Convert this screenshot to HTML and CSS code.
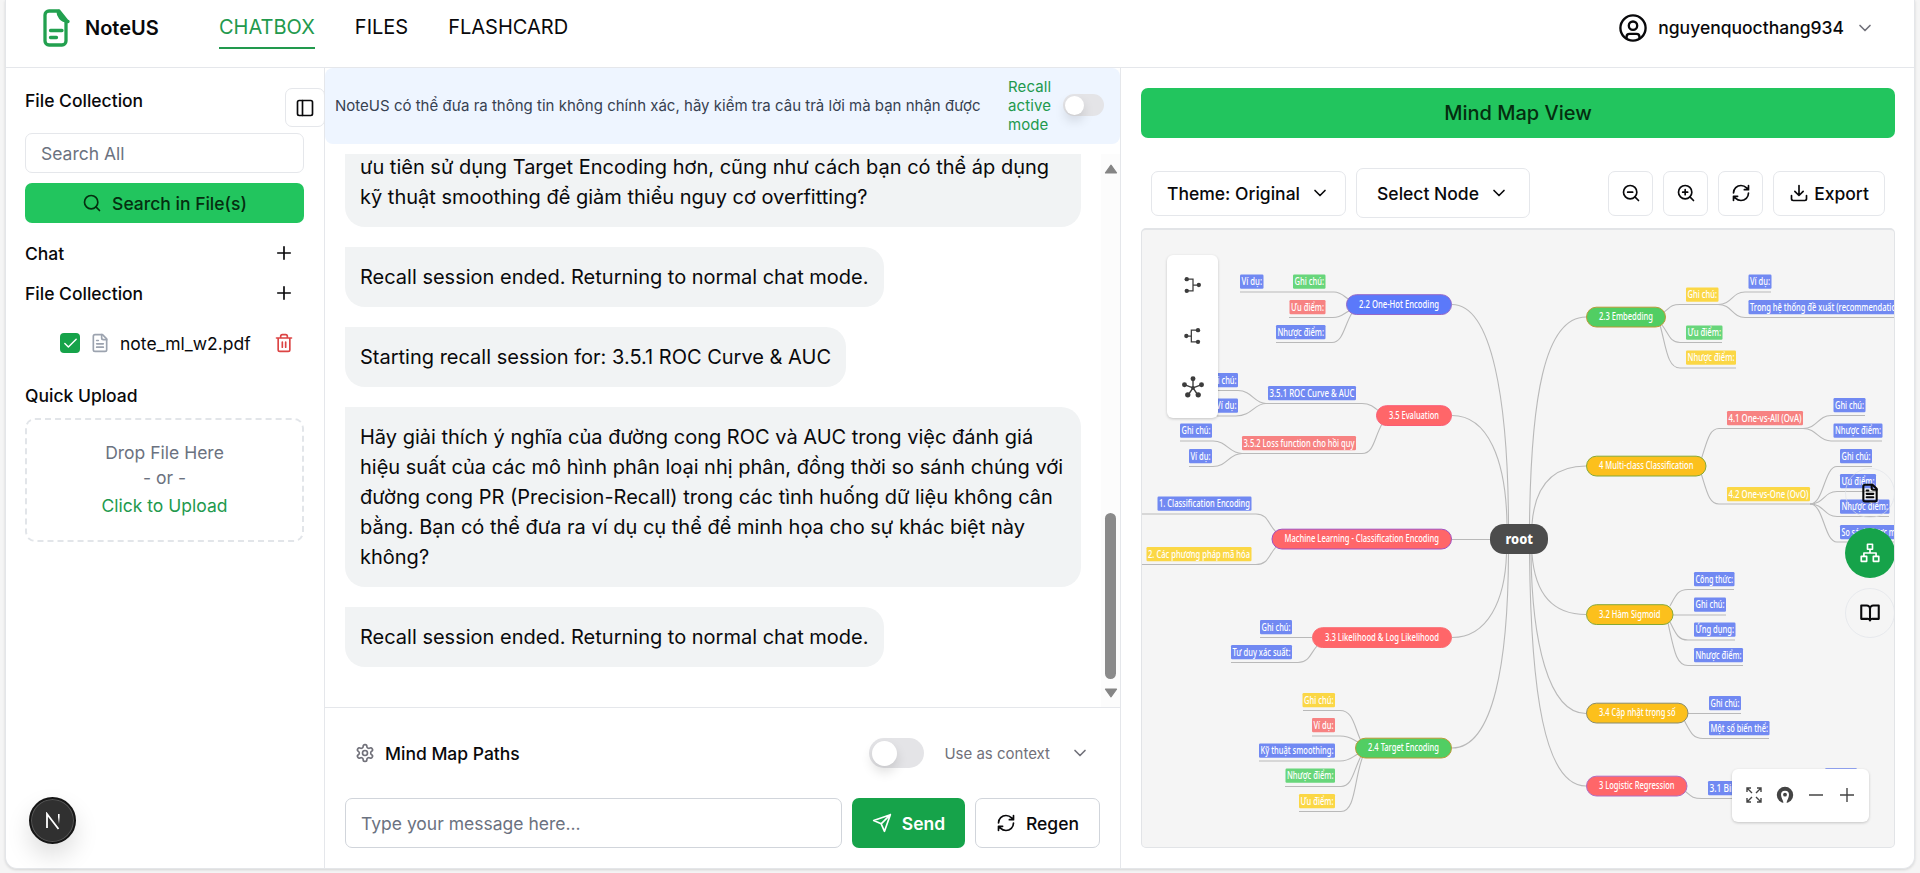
FILE: index.html
```html
<!DOCTYPE html>
<html lang="vi">
<head>
<meta charset="utf-8">
<title>NoteUS</title>
<link rel="stylesheet" href="styles.css">
</head>
<body>
<svg class="defs" aria-hidden="true">
  <symbol id="chev" viewBox="0 0 24 24"><path d="m6 9 6 6 6-6"/></symbol>
  <symbol id="plus" viewBox="0 0 24 24"><path d="M4.500 12h15M12 4.500v15"/></symbol>
  <symbol id="search" viewBox="0 0 24 24"><circle cx="11" cy="11" r="8"/><path d="m21 21-4.3-4.3"/></symbol>
  <symbol id="file" viewBox="0 0 24 24"><path d="M15 2H6a2 2 0 0 0-2 2v16a2 2 0 0 0 2 2h12a2 2 0 0 0 2-2V7Z"/><path d="M14 2v4a2 2 0 0 0 2 2h4M10 9H8M16 13H8M16 17H8"/></symbol>
  <symbol id="refresh" viewBox="0 0 24 24"><path d="M3 12a9 9 0 0 1 9-9 9.75 9.75 0 0 1 6.74 2.74L21 8M21 3v5h-5M21 12a9 9 0 0 1-9 9 9.75 9.75 0 0 1-6.74-2.74L3 16M8 16H3v5"/></symbol>
</svg>
<div class="app">
  <header class="header">
    <svg class="logo" viewBox="0 0 27 38"><path d="M16 2H6a4 4 0 0 0-4 4v26a4 4 0 0 0 4 4h13a4 4 0 0 0 4-4V13M15 2q0 4 2.500 7T25 12.500M16 2l8 10M7.500 21.500H19M7.500 28.500h6"/></svg>
    <span class="brand">NoteUS</span>
    <nav class="nav"><a class="on">CHATBOX</a><a>FILES</a><a>FLASHCARD</a></nav>
    <div class="user">
      <svg class="ic avatar" viewBox="0 0 24 24"><circle cx="12" cy="12" r="10.8"/><circle cx="12" cy="10" r="3.6"/><path d="M6.5 20.5v-1a2.5 2.5 0 0 1 2.5-2.5h6a2.5 2.5 0 0 1 2.5 2.5v1"/></svg>
      <span>nguyenquocthang934</span>
      <svg class="ic s20 dim"><use href="#chev"/></svg>
    </div>
  </header>
  <div class="body">
    <aside class="side">
      <div class="side-top"><span>File Collection</span>
        <button class="collapse"><svg class="ic s20" viewBox="0 0 24 24"><rect x="3" y="3" width="18" height="18" rx="2"/><path d="M9 3v18"/></svg></button></div>
      <div class="search">Search All</div>
      <button class="find"><svg class="ic s20"><use href="#search"/></svg>Search in File(s)</button>
      <div class="sec first"><span>Chat</span><svg class="ic s20"><use href="#plus"/></svg></div>
      <div class="sec"><span>File Collection</span><svg class="ic s20"><use href="#plus"/></svg></div>
      <div class="doc">
        <span class="check"><svg class="ic s16" viewBox="0 0 24 24"><path d="M20 6 9 17l-5-5"/></svg></span>
        <svg class="ic s20 pale"><use href="#file"/></svg>
        <span class="docname">note_ml_w2.pdf</span>
        <svg class="ic s20 red" viewBox="0 0 24 24"><path d="M3 6h18M19 6v14a2 2 0 0 1-2 2H7a2 2 0 0 1-2-2V6M8 6V4a2 2 0 0 1 2-2h4a2 2 0 0 1 2 2v2M10 11v6M14 11v6"/></svg>
      </div>
      <div class="quick">Quick Upload</div>
      <div class="drop"><span>Drop File Here</span><span>- or -</span><span class="up">Click to Upload</span></div>
    </aside>
    <main class="chat">
      <div class="notice"><p>NoteUS có thể đưa ra thông tin không chính xác, hãy kiểm tra câu trả lời mà bạn nhận được</p><span class="recall">Recall active mode</span><i class="switch small"></i></div>
      <div class="log">
        <div class="msgs">
          <p class="msg cut">ưu tiên sử dụng Target Encoding hơn, cũng như cách bạn có thể áp dụng<br>kỹ thuật smoothing để giảm thiểu nguy cơ overfitting?</p>
          <p class="msg">Recall session ended. Returning to normal chat mode.</p>
          <p class="msg">Starting recall session for: 3.5.1 ROC Curve &amp; AUC</p>
          <p class="msg full">Hãy giải thích ý nghĩa của đường cong ROC và AUC trong việc đánh giá<br>hiệu suất của các mô hình phân loại nhị phân, đồng thời so sánh chúng với<br>đường cong PR (Precision-Recall) trong các tình huống dữ liệu không cân<br>bằng. Bạn có thể đưa ra ví dụ cụ thể để minh họa cho sự khác biệt này<br>không?</p>
          <p class="msg">Recall session ended. Returning to normal chat mode.</p>
        </div>
        <div class="bar"><svg class="arrow" viewBox="0 0 12 9"><path d="M6 1 11 8H1z"/></svg><i class="thumb"></i><svg class="arrow" viewBox="0 0 12 9"><path d="M6 8 11 1H1z"/></svg></div>
      </div>
      <div class="composer">
        <div class="paths">
          <svg class="ic s20 dim" viewBox="0 0 24 24"><path d="M12.22 2h-.44a2 2 0 0 0-2 2v.18a2 2 0 0 1-1 1.73l-.43.25a2 2 0 0 1-2 0l-.15-.08a2 2 0 0 0-2.73.73l-.22.38a2 2 0 0 0 .73 2.73l.15.1a2 2 0 0 1 1 1.72v.51a2 2 0 0 1-1 1.74l-.15.09a2 2 0 0 0-.73 2.73l.22.38a2 2 0 0 0 2.73.73l.15-.08a2 2 0 0 1 2 0l.43.25a2 2 0 0 1 1 1.73V20a2 2 0 0 0 2 2h.44a2 2 0 0 0 2-2v-.18a2 2 0 0 1 1-1.73l.43-.25a2 2 0 0 1 2 0l.15.08a2 2 0 0 0 2.73-.73l.22-.39a2 2 0 0 0-.73-2.73l-.15-.08a2 2 0 0 1-1-1.74v-.5a2 2 0 0 1 1-1.74l.15-.09a2 2 0 0 0 .73-2.73l-.22-.38a2 2 0 0 0-2.73-.73l-.15.08a2 2 0 0 1-2 0l-.43-.25a2 2 0 0 1-1-1.73V4a2 2 0 0 0-2-2z"/><circle cx="12" cy="12" r="3"/></svg>
          <b>Mind Map Paths</b><i class="switch"></i><span class="ctx">Use as context</span><svg class="ic s20 dim"><use href="#chev"/></svg>
        </div>
        <div class="entry">
          <div class="field">Type your message here...</div>
          <button class="send"><svg class="ic s20" viewBox="0 0 24 24"><path d="m22 2-7 20-4-9-9-4ZM22 2 11 13"/></svg>Send</button>
          <button class="regen"><svg class="ic s20"><use href="#refresh"/></svg>Regen</button>
        </div>
      </div>
    </main>
    <section class="map">
      <button class="view">Mind Map View</button>
      <div class="tools">
        <button class="btn theme">Theme: Original<svg class="ic s20"><use href="#chev"/></svg></button>
        <button class="btn select">Select Node<svg class="ic s20"><use href="#chev"/></svg></button>
        <span class="grow"></span>
        <button class="btn sq"><svg class="ic s20" viewBox="0 0 24 24"><circle cx="11" cy="11" r="8"/><path d="m21 21-4.3-4.3M8 11h6"/></svg></button>
        <button class="btn sq"><svg class="ic s20" viewBox="0 0 24 24"><circle cx="11" cy="11" r="8"/><path d="m21 21-4.3-4.3M8 11h6M11 8v6"/></svg></button>
        <button class="btn sq"><svg class="ic s20"><use href="#refresh"/></svg></button>
        <button class="btn export"><svg class="ic s20" viewBox="0 0 24 24"><path d="M21 15v4a2 2 0 0 1-2 2H5a2 2 0 0 1-2-2v-4M7 10l5 5 5-5M12 15V3"/></svg>Export</button>
      </div>
      <div class="canvas">
        <svg id="mind" class="mind" viewBox="1142 230 752 617"></svg>
        <div class="layout">
          <svg viewBox="0 0 24 24"><path d="M4 5h8v14H4M12 12h7"/><circle cx="4.500" cy="5" r="2.600"/><circle cx="4.500" cy="19" r="2.600"/><circle cx="19" cy="12" r="2.600"/></svg>
          <svg viewBox="0 0 24 24"><path d="M18 5h-8v14h8M10 12H4"/><circle cx="18" cy="5" r="2.600"/><circle cx="18" cy="19" r="2.600"/><circle cx="4" cy="12" r="2.600"/></svg>
          <svg class="star" viewBox="0 0 24 24"><path d="M12 13V3M12 13 2.500 9.500M12 13l9.500-3.500M12 13 6.500 21M12 13l5.500 8"/><circle cx="12" cy="13" r="2"/><circle cx="12" cy="3" r="2.700"/><circle cx="2.700" cy="9.500" r="2.700"/><circle cx="21.300" cy="9.500" r="2.700"/><circle cx="6.300" cy="20.500" r="2.900"/><circle cx="17.700" cy="20.500" r="2.900"/></svg>
        </div>
        <div class="zoomer">
          <svg viewBox="0 0 16 16"><path d="M1 5V1h4M1 1l5 5M11 1h4v4M15 1l-5 5M1 11v4h4M1 15l5-5M15 11v4h-4M15 15l-5-5"/></svg>
          <svg class="pin" viewBox="0 0 16 16"><circle class="disc" cx="8" cy="8" r="8.200"/><path class="solid" d="M6.500 17C6.500 13 4 11 4 7.700a4 4 0 0 1 8 0C12 11 9.500 13 9.500 17Z"/><circle class="disc" cx="8" cy="7.700" r="1.900"/><path class="stem" d="M8 12v4.200"/></svg>
          <svg viewBox="0 0 16 16"><path d="M1 8h14"/></svg>
          <svg viewBox="0 0 16 16"><path d="M1 8h14M8 1v14"/></svg>
        </div>
        <div class="fabs">
          <span class="fab"><svg class="ic s20 bold"><use href="#file"/></svg></span>
          <span class="fab on"><svg class="ic s20" viewBox="0 0 24 24"><rect x="9" y="1.500" width="6" height="6"/><rect x="1.500" y="16" width="6.500" height="6"/><rect x="16" y="16" width="6.500" height="6"/><path d="M4.700 16v-4h14.600v4M12 12V8"/></svg></span>
          <span class="fab"><svg class="ic s20 bold" viewBox="0 0 24 24"><path d="M2 3h6a4 4 0 0 1 4 4v14a3 3 0 0 0-3-2H1.500V3ZM22 3h-6a4 4 0 0 0-4 4v14a3 3 0 0 1 3-2h7.500V3Z"/></svg></span>
        </div>
      </div>
    </section>
  </div>
</div>
<div class="dev"><svg viewBox="0 0 16 18"><defs><linearGradient id="fade" x1="0" y1="0" x2="0" y2="1"><stop offset=".3" stop-color="#fff"/><stop offset="1" stop-color="#fff" stop-opacity="0"/></linearGradient></defs><path d="M2 16V2l11.500 15"/><path class="r" d="M13 2h1.600v10H13z"/></svg></div>
<script src="mindmap.js"></script>
</body>
</html>
```
FILE: styles.css
```css
* { box-sizing: border-box; }
body { margin: 0; height: 873px; overflow: hidden; background: #f5f5f5; font-family: Inter, "Noto Sans", sans-serif; font-size: 17.5px; color: #09090b; }
button { font: inherit; font-weight: 500; color: inherit; padding: 0; border: 0; background: none; display: flex; align-items: center; justify-content: center; }
p { margin: 0; }
.defs { position: absolute; width: 0; height: 0; }
.ic { fill: none; stroke: currentColor; stroke-width: 2; stroke-linecap: round; stroke-linejoin: round; flex: none; }
.s20 { width: 20px; height: 20px; }
.s16 { width: 17px; height: 17px; }
.bold { stroke-width: 2.5; }
.dim { color: #71717a; }
.pale { color: #9ca3af; }
.red { color: #dc4444; }
.grow { flex: 1; }

.app { margin: 0 5px 0 5px; width: 1910px; height: 869px; background: #fff; border: 1px solid #e4e6e9; border-top: 0; border-radius: 0 0 12px 12px; box-shadow: 0 1px 3px #0002; display: flex; flex-direction: column; }
.header { height: 68px; flex: none; border-bottom: 1px solid #e5e7eb; padding: 0 39px 12px 37px; display: flex; align-items: center; }
.logo { width: 27px; height: 38px; fill: none; stroke: #22a04f; stroke-width: 3.300; stroke-linecap: round; stroke-linejoin: round; }
.brand { font-size: 20px; font-weight: 600; margin-left: 15px; width: 134px; }
.nav { display: flex; gap: 40px; font-size: 20px; align-self: flex-start; padding-top: 10px; }
.nav a { height: 39px; line-height: 34px; border-bottom: 2px solid transparent; }
.nav .on { color: #22994d; border-color: #22994d; }
.user { margin-left: auto; display: flex; align-items: center; font-weight: 500; gap: 11px; }
.avatar { width: 28px; height: 28px; }

.body { flex: 1; display: flex; min-height: 0; }
.side { width: 319px; border-right: 1px solid #e5e7eb; padding: 20px 20px 0 19px; font-weight: 500; display: flex; flex-direction: column; }
.side-top { display: flex; justify-content: space-between; height: 45px; margin-right: -21px; line-height: 26px; }
.collapse { width: 40px; height: 39px; border: 1px solid #e5e7eb; border-radius: 7px; }
.search { height: 40px; border: 1px solid #e5e7eb; border-radius: 7px; padding-left: 15px; line-height: 39px; color: #6b7280; font-weight: 400; }
.find { height: 40px; margin-top: 10px; border-radius: 7px; background: #22c55e; gap: 10px; color: #052e10; }
.sec { height: 40px; display: flex; align-items: center; justify-content: space-between; padding-right: 10px; }
.first { margin-top: 10px; }
.doc { display: flex; align-items: center; height: 60px; padding: 0 10px 0 35px; font-weight: 400; }
.check { width: 20px; height: 20px; border-radius: 4px; background: #16a34a; color: #fff; display: grid; place-items: center; margin-right: 10px; }
.docname { margin-left: 10px; flex: 1; }
.quick { margin-top: 12px; line-height: 22px; }
.drop { margin-top: 11px; height: 124px; border: 2px dashed #e2e5e9; border-radius: 10px; color: #6b7280; font-weight: 400; text-align: center; display: flex; flex-direction: column; line-height: 25px; padding-top: 20px; }
.up { color: #22994d; line-height: 31px; }

.chat { width: 796px; border-right: 1px solid #e5e7eb; display: flex; flex-direction: column; }
.notice { height: 76px; flex: none; background: #eef5ff; border-radius: 8px; display: flex; align-items: center; padding: 0 16px 2px 10px; font-size: 15px; color: #374151; }
.notice p { width: 673px; white-space: nowrap; letter-spacing: .01px; }
.recall { width: 55px; line-height: 19px; color: #22994d; letter-spacing: .1px; }
.switch { width: 55px; height: 30px; border-radius: 15px; background: #e4e4e7; padding: 2.500px; }
.switch::before { content: ""; display: block; width: 25px; height: 25px; border-radius: 50%; background: #fff; box-shadow: 0 6px 12px #0002; }
.small { width: 41px; height: 22px; padding: 1.500px; flex: none; }
.small::before { width: 19px; height: 19px; }
.log { margin-top: 10px; height: 553px; display: flex; justify-content: space-between; }
.msgs { padding-left: 20px; display: flex; flex-direction: column; align-items: flex-start; gap: 20px; }
.msg { background: #f1f3f4; border-radius: 0 20px 20px 20px; padding: 15px; font-size: 20px; line-height: 30px; white-space: nowrap; }
.cut, .full { width: 736px; }
.cut { height: 73px; border-top-right-radius: 0; display: flex; align-items: flex-end; }
.bar { width: 19px; background: #fcfcfc; display: flex; flex-direction: column; align-items: center; padding: 10px 0 9px; }
.arrow { width: 14px; height: 10px; fill: #858585; stroke: #858585; stroke-linejoin: round; }
.thumb { width: 11px; height: 166px; border-radius: 6px; background: #8a8a8a; margin: auto 0 9px; }
.composer { border-top: 1px solid #e5e7eb; padding: 20px 20px 0 20px; flex: 1; }
.paths { height: 50px; display: flex; align-items: center; padding: 0 10px 0 10px; }
.paths b { font-weight: 550; margin: 0 auto 0 10px; }
.ctx { margin: 0 20px 0 20px; font-size: 15px; color: #71717a; }
.entry { margin-top: 20px; display: flex; gap: 10px; height: 50px; }
.field { flex: 1; border: 1px solid #d1d5db; border-radius: 7px; padding-left: 15px; line-height: 49px; color: #6b7280; }
.send { width: 113px; border-radius: 7px; background: #16a34a; color: #fff; gap: 10px; font-weight: 600; }
.regen { width: 125px; border: 1px solid #d1d5db; border-radius: 7px; gap: 10px; }

.map { flex: 1; padding: 20px 19px 0 20px; min-width: 0; }
.view { width: 100%; height: 50px; border-radius: 7px; background: #22c55e; font-size: 20px; color: #052e10; }
.tools { margin-top: 20px; height: 70px; padding: 0 10px; display: flex; align-items: center; gap: 10px; }
.btn { height: 45px; border: 1px solid #e5e7eb; border-radius: 7px; }
.theme { width: 195px; gap: 10px; }
.select { width: 174px; height: 50px; gap: 10px; }
.sq { width: 45px; }
.export { width: 112px; gap: 5px; }
.canvas { position: relative; height: 620px; border: 1px solid #e2e4e7; border-top-width: 2px; border-radius: 5px; background: #f5f5f5; overflow: hidden; }
.mind { display: block; width: 752px; height: 617px; font-family: "Noto Sans", sans-serif; }
.line { fill: none; stroke: #b9b9b9; stroke-width: 1.100; }
.label { font-size: 9.800px; font-weight: 500; fill: #fff; }
.rootlabel { font-size: 14px; font-weight: 800; fill: #fff; }
.layout { position: absolute; left: 25px; top: 25px; width: 51px; height: 163px; border-radius: 6px; background: #fff; box-shadow: 0 1px 3px #0003; display: flex; flex-direction: column; justify-content: space-between; align-items: center; padding: 20px 0; }
.layout svg { width: 20px; height: 20px; overflow: visible; fill: #3c3c3c; }
.layout .star { width: 22px; height: 22px; }
.layout path { fill: none; stroke: #3c3c3c; stroke-width: 1.500; }
.zoomer { position: absolute; left: 590px; top: 539px; width: 137px; height: 53px; border-radius: 6px; background: #fff; box-shadow: 0 1px 3px #0003; display: flex; align-items: center; justify-content: space-between; padding: 0 14px 2px; }
.zoomer svg { width: 16px; height: 16px; fill: none; stroke: #444; stroke-width: 1.400; overflow: visible; }
.zoomer .solid { fill: #fff; stroke: none; }
.zoomer .disc { fill: #444; stroke: none; }
.zoomer .stem { stroke: #fff; stroke-width: 1.500; }
.fabs { position: absolute; right: -1px; top: 238px; display: flex; flex-direction: column; gap: 10px; }
.fab { width: 50px; height: 50px; border-radius: 50%; border: 1px solid #dfe3e8aa; display: grid; place-items: center; }
.fab.on { background: #16a34a; border: 0; color: #fff; }
.dev { position: absolute; left: 29px; top: 797px; width: 47px; height: 47px; border-radius: 50%; background: #303030; border: 2px solid #161616; box-shadow: 0 0 0 1px #555 inset, 0 12px 24px #0002; display: grid; place-items: center; }
.dev svg { width: 16px; height: 18px; fill: none; stroke: #fff; stroke-width: 1.800; }
.dev .r { fill: url(#fade); stroke: none; }
```
FILE: mindmap.js
```js
const NS = 'http://www.w3.org/2000/svg';
const svg = document.getElementById('mind');
const B = '#7189f2', R = '#f78282', G = '#68d67b', Y = '#fbd745';

function add(tag, attrs, text) {
  const el = document.createElementNS(NS, tag);
  for (const k in attrs) el.setAttribute(k, attrs[k]);
  if (text) el.textContent = text;
  svg.appendChild(el);
}

// Connectors from the root and between branches
[
  'M1452 304.500C1492 304.500 1508 400 1508.500 524', 'M1452 415.500C1488 415.500 1506 460 1507 524',
  'M1452 539.500H1490', 'M1452 637.500C1488 637.500 1505 600 1506.500 554', 'M1452 748C1494 748 1508 660 1508.500 554',
  'M1586 317C1544 317 1531 400 1529.500 524', 'M1586 466C1554 466 1535 485 1532 524',
  'M1586 614.500C1554 614.500 1535 595 1532 554', 'M1586 713.500C1548 713.500 1532 640 1531 554', 'M1586 786C1544 786 1531 690 1529.500 554',
  'M1240 292H1334C1342 292 1345 298 1350 300', 'M1289 317.500H1333C1342 317.500 1344 313 1349 311', 'M1276 342.500H1332C1343 342.500 1344 326 1352 313',
  'M1217 390.500H1238C1252 390.500 1254 403.500 1266 403.500H1362C1370 403.500 1374 407 1380 412', 'M1217 416H1236C1252 416 1254 403.500 1266 403.500',
  'M1180 441H1213C1227 441 1229 453.500 1242 453.500H1362C1374 453.500 1374 438 1382 424', 'M1189 466.500H1213C1227 466.500 1229 453.500 1242 453.500',
  'M1141 514H1256C1268 514 1268 524 1276 532', 'M1141 564.500H1256C1268 564.500 1268 556 1276 547',
  'M1260 637.500H1312', 'M1231 662.500H1298C1309 662.500 1310 654 1317 646',
  'M1303 710.500H1340C1353 710.500 1354 726 1361 741', 'M1312 736H1340C1350 736 1352 739 1358 742', 'M1259 761H1340C1350 761 1352 757 1358 754',
  'M1285 786.500H1341C1352 786.500 1353 772 1361 756', 'M1299 811.500H1341C1356 811.500 1354 778 1363 756',
  'M1664 312C1670 308 1670 304.500 1680 304.500H1718C1732 304.500 1732 292 1745 292H1771', 'M1718 304.500C1732 304.500 1732 317.500 1745 317.500H1896',
  'M1662 325C1669 334 1670 342.500 1680 342.500H1722', 'M1660 325C1666 346 1667 368 1680 368H1736',
  'M1701 460C1707 442 1709 428.500 1719 428.500H1803C1817 428.500 1818 415.500 1831 415.500H1865', 'M1803 428.500C1817 428.500 1818 441 1831 441H1882',
  'M1701 473C1707 492 1709 504 1719 504H1810C1824 504 1824 466.500 1837 466.500H1872', 'M1810 504C1824 504 1824 491.500 1837 491.500H1876',
  'M1810 504C1824 504 1824 516.500 1837 516.500H1889', 'M1810 504C1824 504 1824 542 1837 542H1896',
  'M1670 606C1676 595 1678 589.500 1688 589.500H1734', 'M1673 615H1726', 'M1670 622C1676 634 1678 640 1688 640H1735', 'M1668 623C1674 650 1676 665.500 1688 665.500H1743',
  'M1688 713.500H1741', 'M1684 720C1691 733 1693 738.500 1703 738.500H1769', 'M1685 791C1691 796 1692 798.500 1702 798.500H1760'
].forEach(d => add('path', { d, class: 'line' }));

// Leaf tags: x, y, width, colour, label
[
  [1240, 274.5, 23.5, B, 'Ví dụ:'], [1293, 274.5, 32.5, G, 'Ghi chú:'], [1289.5, 300, 36, R, 'Ưu điểm:'], [1276, 325, 49.5, B, 'Nhược điểm:'],
  [1206, 373, 32, B, 'Ghi chú:'], [1214.5, 398.5, 23.5, B, 'Ví dụ:'], [1268, 386, 88, B, '3.5.1 ROC Curve & AUC'],
  [1180, 423.5, 32, B, 'Ghi chú:'], [1189, 449, 23, B, 'Ví dụ:'], [1242, 436, 114, R, '3.5.2 Loss function cho hồi quy'],
  [1157.5, 496.5, 94, B, '1. Classification Encoding'], [1146.5, 547, 105, Y, '2. Các phương pháp mã hóa'],
  [1260, 620, 32, B, 'Ghi chú:'], [1231, 645, 61, B, 'Tư duy xác suất:'],
  [1302.5, 693, 32.5, Y, 'Ghi chú:'], [1312, 718, 23, R, 'Ví dụ:'], [1259, 743.5, 76, B, 'Kỹ thuật smoothing:'], [1285.5, 768.5, 49.5, G, 'Nhược điểm:'], [1299, 794, 36, Y, 'Ưu điểm:'],
  [1686, 287.5, 32.5, Y, 'Ghi chú:'], [1748.5, 274.5, 23, B, 'Ví dụ:'], [1748.5, 300, 149, B, 'Trong hệ thống đề xuất (recommendatio'],
  [1686, 325.5, 36.5, G, 'Ưu điểm:'], [1686, 350.5, 50, Y, 'Nhược điểm:'],
  [1727, 411, 76, R, '4.1 One-vs-All (OvA)'], [1833.5, 398, 32, B, 'Ghi chú:'], [1833.5, 423.5, 49, B, 'Nhược điểm:'],
  [1727, 487, 83, Y, '4.2 One-vs-One (OvO)'], [1840, 449, 32, B, 'Ghi chú:'], [1840, 474, 36, B, 'Ưu điểm:'], [1840, 499.5, 49.5, B, 'Nhược điểm:'], [1840, 525, 57, B, 'So sánh được m'],
  [1694, 572, 40.5, B, 'Công thức:'], [1694, 597.5, 32, B, 'Ghi chú:'], [1694, 622.5, 41.5, B, 'Ứng dụng:'], [1694, 648, 49, B, 'Nhược điểm:'],
  [1709, 696, 32, B, 'Ghi chú:'], [1709, 721, 60.5, B, 'Một số biến thể:'], [1708, 781, 45, B, '3.1 Binary:'], [1825, 768.2, 32, B, '']
].forEach(([x, y, w, fill, t]) => {
  add('rect', { x, y, width: w, height: 14.3, rx: 1.2, fill });
  if (t) add('text', { x: x + 1.5, y: y + 10.6, class: 'label', textLength: w - 3, lengthAdjust: 'spacingAndGlyphs' }, t);
});

// Branch pills: x, y, width, fill, border, label
[
  [1346, 294.5, 106, '#5b79fa', '#9567c8', '2.2 One-Hot Encoding'], [1376, 405.5, 76, '#ff6669', '#fa5c75', '3.5 Evaluation'],
  [1271.5, 529, 180.5, '#ff6669', '#a14fc0', 'Machine Learning - Classification Encoding'], [1312, 627.5, 140, '#ff6669', '#fa6a70', '3.3 Likelihood & Log Likelihood'],
  [1355, 738, 97, '#51ce63', '#b99a35', '2.4 Target Encoding'], [1586, 307, 80, '#51ce63', '#b99a35', '2.3 Embedding'],
  [1586, 456, 120.5, '#fcc01c', '#86a835', '4 Multi-class Classification'], [1586, 604.5, 87.5, '#fcc01c', '#86a835', '3.2 Hàm Sigmoid'],
  [1586, 703, 102.5, '#fcc01c', '#8a8c6a', '3.4 Cập nhật trọng số'], [1586, 776, 101.5, '#ff6669', '#b06cc0', '3 Logistic Regression']
].forEach(([x, y, w, fill, stroke, t]) => {
  add('rect', { x: x + .5, y: y + .2, width: w - 1, height: 19.8, rx: 9.9, fill, stroke });
  add('text', { x: x + 13, y: y + 13, class: 'label', textLength: w - 26, lengthAdjust: 'spacingAndGlyphs' }, t);
});

add('rect', { x: 1490, y: 524, width: 58, height: 30, rx: 14, fill: '#4c4c4c' });
add('text', { x: 1505.5, y: 543.5, class: 'rootlabel', textLength: 27.5, lengthAdjust: 'spacingAndGlyphs' }, 'root');
```
